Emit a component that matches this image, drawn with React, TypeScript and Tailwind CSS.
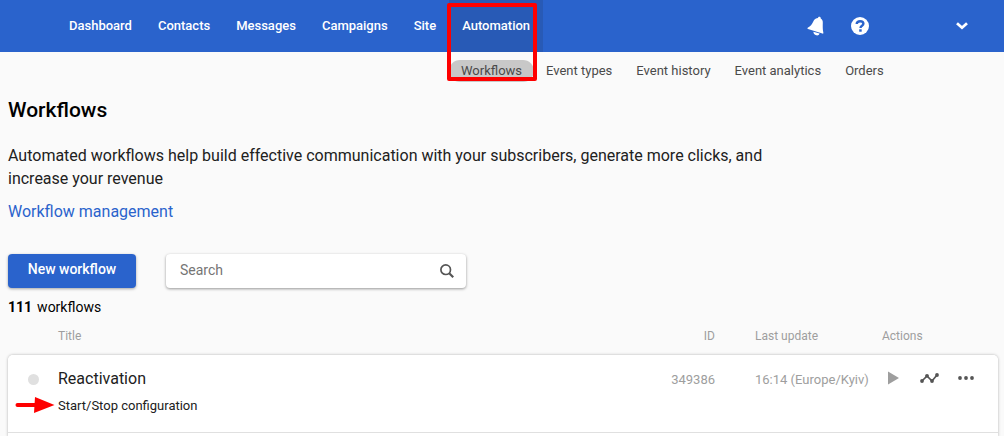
const NAV = ["Dashboard", "Contacts", "Messages", "Campaigns", "Site", "Automation"];
const SUBNAV = ["Workflows", "Event types", "Event history", "Event analytics", "Orders"];
const WORKFLOWS = [
  { id: "349386", title: "Reactivation", event: "Start/Stop configuration", updated: "16:14 (Europe/Kyiv)" },
];

function BellIcon() {
  return (
    <svg viewBox="0 0 18 20" className="h-5 w-[18px]" fill="currentColor" aria-hidden="true">
      <path d="M11 1.900C11.100.9 11.900.5 12.700.7c.8.200 1.200.9 1 1.800 1.500.8 2.200 2.300 2.100 4.200-.100 3-.100 5.500.2 8.100l.4 2.200c0 .6-.4.800-1 .6L1 12.900c-.6-.2-.7-.7-.3-1.100l1.900-1.300C4.900 8.800 5.500 6.700 6.800 4.400 7.700 2.800 9.200 1.900 11 1.900z" />
      <path d="M6.400 15.800l6.200 1.700c-.4 1.500-1.800 2.200-3.400 1.800-1.700-.4-2.800-1.800-2.800-3.500z" />
    </svg>
  );
}

function HelpIcon() {
  return (
    <svg viewBox="0 0 18 18" className="size-[18px]" aria-hidden="true">
      <circle cx="9" cy="9" r="9" fill="currentColor" />
      <path d="M5.700 7.100C5.700 5.100 7.100 4.200 9.100 4.200s3.300 1 3.300 2.600c0 2-2.900 2-2.900 4.100" fill="none" stroke="#2a63cc" strokeWidth="2.400" />
      <rect x="8.200" y="12.300" width="2.500" height="2.400" fill="#2a63cc" />
    </svg>
  );
}

export default function App() {
  return (
    <div className="overflow-hidden bg-[#fafafa] font-[Roboto,sans-serif] text-[#212121]">
      <header className="relative">
        <div className="flex h-[52px] items-stretch bg-[#2a63cc] pr-8 pl-14 text-white">
          <nav aria-label="Main" className="flex flex-1 text-[13px] font-medium">
            {NAV.map((item) => (
              <a
                key={item}
                href="#"
                className={item === "Automation" ? "flex items-center bg-[#285ab6] px-[13px]" : "flex items-center px-[13px]"}
              >
                {item}
              </a>
            ))}
          </nav>
          <button type="button" aria-label="Notifications" className="mr-[26px]"><BellIcon /></button>
          <button type="button" aria-label="Help" className="mr-[87px]"><HelpIcon /></button>
          <button type="button" aria-label="Account menu" className="pr-1">
            <svg viewBox="0 0 12 8" className="h-2 w-3" fill="none" stroke="currentColor" strokeWidth="2.800" aria-hidden="true">
              <path d="M1 1.300l5 4.400 5-4.400" />
            </svg>
          </button>
        </div>
        <nav aria-label="Automation" className="flex pt-2 pl-[449px] text-[13px] leading-[22px] text-[#4a4a4a]">
          {SUBNAV.map((item) => (
            <a
              key={item}
              href="#"
              className={item === "Workflows" ? "rounded-full bg-[#c8c8c8] px-3" : "px-3"}
            >
              {item}
            </a>
          ))}
        </nav>
        <div className="pointer-events-none absolute top-[3px] left-[447px] h-[78px] w-[90px] rounded-[2px] border-4 border-[#fe0000]" />
      </header>

      <main className="pr-1.5 pl-2">
        <h1 className="mt-3.5 text-[21px] leading-7 font-medium text-black">Workflows</h1>
        <p className="mt-5 max-w-[780px] text-base leading-[23px]">
          Automated workflows help build effective communication with your subscribers, generate more clicks, and increase your revenue
        </p>
        <a href="#" className="mt-2.5 block w-fit text-base leading-[23px] text-[#2a63cc]">Workflow management</a>

        <div className="mt-[31px] flex items-start">
          <button type="button" className="h-[34px] w-32 rounded-[4px] bg-[#2a63cc] pb-1 text-sm font-medium text-white shadow-[0_1px_3px_rgba(0,0,0,0.35)]">
            New workflow
          </button>
          <label className="ml-[30px] flex h-[34px] w-[300px] items-center rounded-[4px] bg-white pr-3 pl-3.5 shadow-[0_1px_3px_rgba(0,0,0,0.4)]">
            <input type="search" aria-label="Search" placeholder="Search" className="min-w-0 flex-1 bg-transparent pb-0.5 text-sm outline-none placeholder:text-[#757575]" />
            <svg viewBox="0 0 14 14" className="size-3.5" fill="none" stroke="#555" aria-hidden="true">
              <circle cx="5.700" cy="5.700" r="4.800" strokeWidth="1.700" />
              <path d="M9.200 9.200l4 4" strokeWidth="2.200" />
            </svg>
          </label>
        </div>

        <p className="mt-2 text-sm leading-[22px] text-black">
          <b className="mr-[5px] font-bold">111</b>workflows
        </p>

        <table className="w-full table-fixed border-separate border-spacing-0 text-left">
          <colgroup>
            <col className="w-[50px]" />
            <col />
            <col className="w-20" />
            <col className="w-[167px]" />
            <col className="w-[116px]" />
          </colgroup>
          <thead className="text-xs text-[#9e9e9e]">
            <tr className="h-[37px] [&>th]:pb-0.5">
              <td />
              <th scope="col" className="font-normal">Title</th>
              <th scope="col" className="text-right font-normal">ID</th>
              <th scope="col" className="pl-10 font-normal">Last update</th>
              <th scope="col" className="font-normal">Actions</th>
            </tr>
          </thead>
          <tbody className="rounded-t-[5px] shadow-[0_0_3px_rgba(0,0,0,0.3)]">
            {WORKFLOWS.map((row) => (
              <tr key={row.id} className="align-top first:[&>td:first-child]:rounded-tl-[5px] first:[&>td:last-child]:rounded-tr-[5px] [&>td]:border-b [&>td]:border-[#e0e0e0] [&>td]:bg-white">
                <td className="relative pt-[19px] pl-5">
                  <span className="block size-[11px] rounded-full bg-[#e0e0e0]" />
                  <svg viewBox="0 0 40 16" className="absolute top-[42px] left-[7px] h-4 w-10" aria-hidden="true">
                    <path d="M2.500 8H22" stroke="#fe0000" strokeWidth="4" strokeLinecap="round" />
                    <path d="M20 0l19.500 8L19 16z" fill="#fe0000" />
                  </svg>
                </td>
                <td className="pt-3 pb-4">
                  <div className="text-base leading-6">{row.title}</div>
                  <div className="mt-1 text-[13px] leading-[21px]">{row.event}</div>
                </td>
                <td className="pt-[15px] text-right text-[13px] leading-5 text-[#9e9e9e]">{row.id}</td>
                <td className="pt-[15px] pl-10 text-[13px] leading-5 whitespace-nowrap text-[#9e9e9e]">{row.updated}</td>
                <td className="pt-4">
                  <div className="flex items-center pl-1.5 text-[#555]">
                    <button type="button" aria-label="Start" className="mr-[21px] text-[#9e9e9e]">
                      <svg viewBox="0 0 11 14" className="h-3.5 w-[11px]" fill="currentColor" aria-hidden="true"><path d="M0 .5l11 6.500L0 13.500z" /></svg>
                    </button>
                    <button type="button" aria-label="Statistics" className="mr-[19px]">
                      <svg viewBox="0 0 19 10" className="h-2.5 w-[19px]" fill="currentColor" aria-hidden="true">
                        <path d="M2 8l5-5 5 5 5-6" fill="none" stroke="currentColor" strokeWidth="1.700" />
                        <circle cx="2" cy="8" r="1.900" />
                        <circle cx="7" cy="2.800" r="1.900" />
                        <circle cx="12" cy="8" r="1.900" />
                        <circle cx="17" cy="2" r="1.900" />
                      </svg>
                    </button>
                    <button type="button" aria-label="More actions">
                      <svg viewBox="0 0 16 4" className="h-1 w-4" fill="currentColor" aria-hidden="true">
                        <circle cx="2" cy="2" r="1.900" />
                        <circle cx="8" cy="2" r="1.900" />
                        <circle cx="14" cy="2" r="1.900" />
                      </svg>
                    </button>
                  </div>
                </td>
              </tr>
            ))}
            <tr className="h-1"><td colSpan={5} className="bg-white p-0" /></tr>
          </tbody>
        </table>
      </main>
    </div>
  );
}
